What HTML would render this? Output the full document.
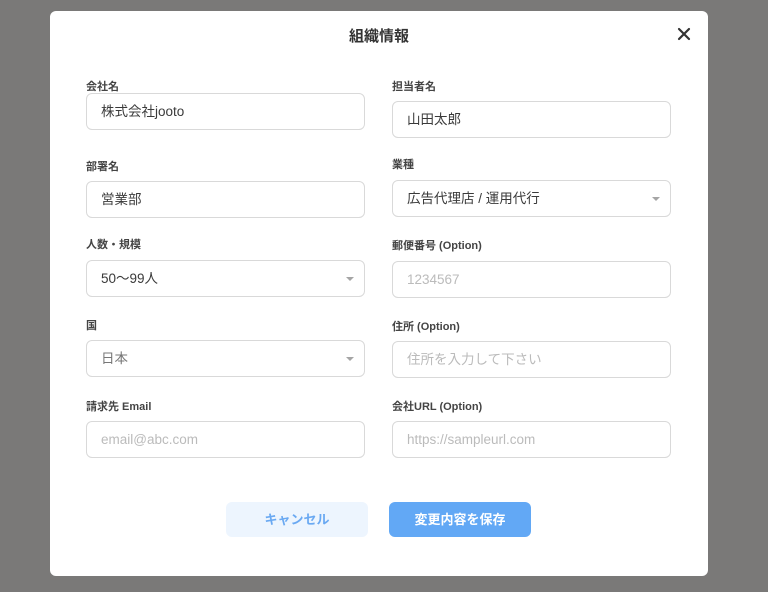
<!DOCTYPE html>
<html><head><meta charset="utf-8"><style>
*{box-sizing:border-box;margin:0;padding:0}
body{width:768px;height:592px;background:#7a7978;position:relative;overflow:hidden;font-family:"Liberation Sans","Noto Sans CJK JP",sans-serif;}
.m{position:absolute;left:50px;top:11px;width:658px;height:565px;background:#fff;border-radius:6px}
.t{position:absolute;left:0;width:658px;top:14px;text-align:center;font-size:15px;font-weight:bold;color:#333}
.x{position:absolute;left:627px;top:16px}
.l{position:absolute;font-size:11px;font-weight:bold;color:#444}
.i{position:absolute;width:279px;height:37px;border:1px solid #d9d9d9;border-radius:6px;font-size:13.5px;color:#3a3a3a;padding-left:14px;line-height:35px}
.p{color:#bbb}
.g{color:#777}
.a{position:absolute;right:10px;top:16px;width:0;height:0;border-left:4.5px solid transparent;border-right:4.5px solid transparent;border-top:4.5px solid #a5a5a5}
.b{position:absolute;top:491px;width:142px;height:35px;border-radius:6px;font-size:13px;font-weight:bold;text-align:center;line-height:35px}
</style></head><body>
<div class="m">
<div class="t">組織情報</div>
<svg class="x" width="14" height="14" viewBox="0 0 14 14"><path d="M2 2L12 12M12 2L2 12" stroke="#333" stroke-width="2.2" stroke-linecap="round"/></svg>

<div class="l" style="left:36px;top:67px">会社名</div>
<div class="i" style="left:36px;top:82px">株式会社jooto</div>
<div class="l" style="left:36px;top:147px">部署名</div>
<div class="i" style="left:36px;top:170px">営業部</div>
<div class="l" style="left:36px;top:225px">人数・規模</div>
<div class="i" style="left:36px;top:249px">50〜99人<span class="a"></span></div>
<div class="l" style="left:36px;top:306px">国</div>
<div class="i g" style="left:36px;top:329px">日本<span class="a"></span></div>
<div class="l" style="left:36px;top:387px">請求先 Email</div>
<div class="i p" style="left:36px;top:410px">email@abc.com</div>

<div class="l" style="left:342px;top:67px">担当者名</div>
<div class="i" style="left:342px;top:90px">山田太郎</div>
<div class="l" style="left:342px;top:145px">業種</div>
<div class="i" style="left:342px;top:169px">広告代理店 / 運用代行<span class="a"></span></div>
<div class="l" style="left:342px;top:226px">郵便番号 (Option)</div>
<div class="i p" style="left:342px;top:250px">1234567</div>
<div class="l" style="left:342px;top:307px">住所 (Option)</div>
<div class="i p" style="left:342px;top:330px">住所を入力して下さい</div>
<div class="l" style="left:342px;top:387px">会社URL (Option)</div>
<div class="i p" style="left:342px;top:410px">https://sampleurl.com</div>

<div class="b" style="left:176px;background:#edf5fe;color:#6aa9f2">キャンセル</div>
<div class="b" style="left:339px;background:#62a8f5;color:#fff">変更内容を保存</div>
</div>
</body></html>
